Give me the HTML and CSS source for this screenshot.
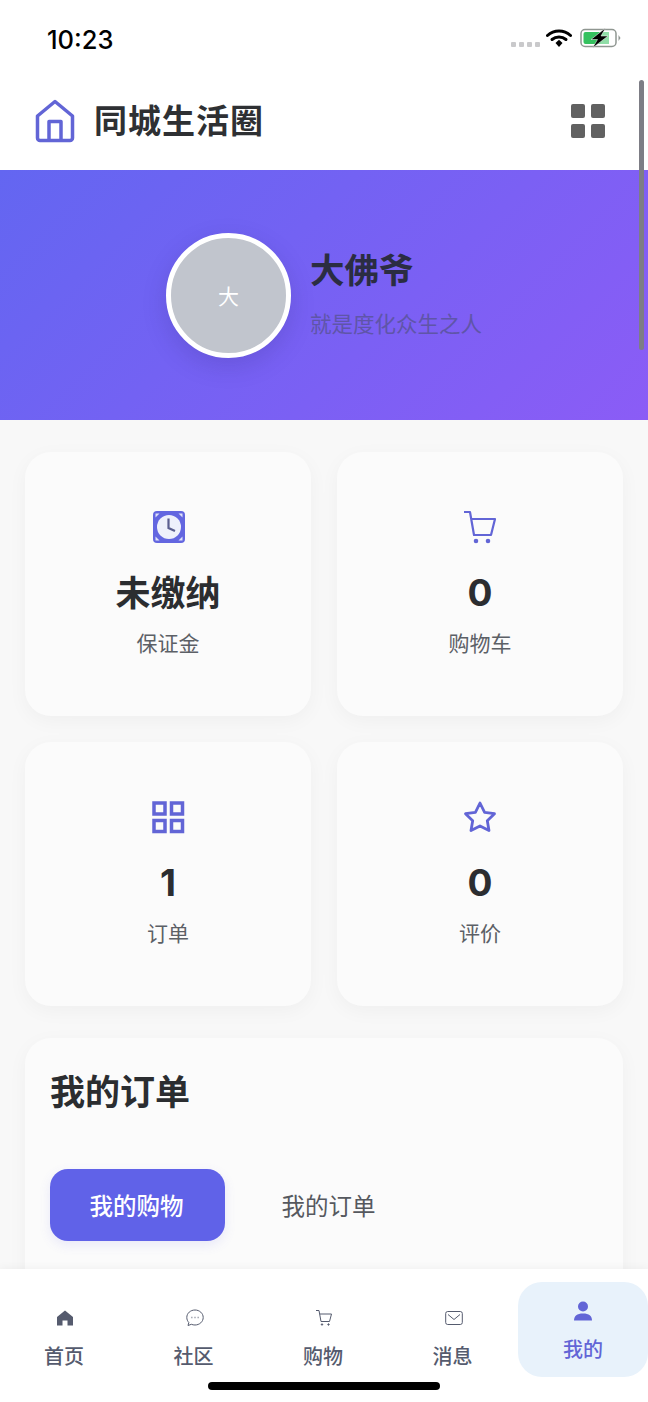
FILE: index.html
```html
<!DOCTYPE html>
<html lang="zh-CN">
<head>
  <meta charset="UTF-8" />
  <meta name="viewport" content="width=device-width, initial-scale=1.0" />
  <title>同城生活圈</title>
  <link rel="stylesheet" href="styles.css">
</head>
<body>
  <div class="app">
    <!-- status bar -->
    <div class="status-bar">
      <span class="time">10:23</span>
      <div class="status-icons">
        <div class="signal"><i></i><i></i><i></i><i></i></div>
        <svg class="wifi" width="26" height="20" viewBox="0 0 26 20">
          <path d="M1.500 7.500C8 1.500 18 1.500 24.500 7.500" fill="none" stroke="#000" stroke-width="3" stroke-linecap="round"/>
          <path d="M6 11.500C10 8 16 8 20 11.500" fill="none" stroke="#000" stroke-width="3" stroke-linecap="round"/>
          <path d="M9.500 15L13 11.800 16.500 15 13 19z" fill="#000"/>
        </svg>
        <svg class="battery" width="42" height="20" viewBox="0 0 42 20">
          <rect x="1" y="1.500" width="35" height="17" rx="4" fill="#fff" stroke="#8f9691" stroke-width="1.500"/>
          <rect x="3.500" y="4" width="17" height="12" rx="2" fill="#35c15f"/>
          <rect x="20" y="4" width="9" height="12" fill="#35c15f" opacity="0.55"/>
          <path d="M38.500 7l2 3-2 3z" fill="#8f9691"/>
          <path d="M25.500 0L11 11.500H17.500L12.500 20 28 8H21z" fill="#000" stroke="#fff" stroke-width="0.500"/>
        </svg>
      </div>
    </div>

    <header class="top-bar">
      <div class="brand">
        <svg width="42" height="44" viewBox="0 0 42 44" fill="none" stroke="#6265d6" stroke-width="3.500" stroke-linejoin="round">
          <path d="M21 2.500L38.500 17V39a2.500 2.500 0 0 1-2.500 2.500H6A2.500 2.500 0 0 1 3.500 39V17z"/>
          <path d="M15 41.500V22.500H27V41.500"/>
        </svg>
        <span class="brand-name">同城生活圈</span>
      </div>
      <div class="menu-grid"><i></i><i></i><i></i><i></i></div>
    </header>

    <main class="content">
      <section class="hero">
        <div class="avatar"><span>大</span></div>
        <div class="hero-text">
          <div class="hero-name">大佛爷</div>
          <div class="hero-bio">就是度化众生之人</div>
        </div>
      </section>

      <section class="stats">
        <div class="stat-card">
          <svg class="stat-icon icon-clock" width="34" height="34" viewBox="0 0 34 34">
            <rect x="1" y="1" width="32" height="32" rx="4" fill="#6366e0"/>
            <circle cx="17" cy="17" r="12" fill="#eef0fb"/>
            <path d="M3.500 3.500h4l-4 4zM30.500 3.500h-4l4 4zM3.500 30.500h4l-4-4zM30.500 30.500h-4l4-4z" fill="#dfe1f8"/>
            <path d="M16.500 8.500V18L23 21" fill="none" stroke="#5b5e8f" stroke-width="2.200"/>
          </svg>
          <div class="stat-value stat-text">未缴纳</div>
          <div class="stat-label">保证金</div>
        </div>
        <div class="stat-card">
          <svg class="stat-icon" width="36" height="34" viewBox="0 0 36 34" fill="none" stroke="#6265d6" stroke-width="2.200" stroke-linejoin="round">
            <path d="M2 2H8L12 25H29L33 9H9"/>
            <circle cx="14" cy="31" r="1.200" fill="#6265d6"/>
            <circle cx="26" cy="31" r="1.200" fill="#6265d6"/>
          </svg>
          <div class="stat-value">0</div>
          <div class="stat-label">购物车</div>
        </div>
        <div class="stat-card">
          <svg class="stat-icon" width="34" height="34" viewBox="0 0 34 34" fill="none" stroke="#6265d6" stroke-width="3.500">
            <rect x="3" y="3" width="11" height="11"/>
            <rect x="20.500" y="3" width="11" height="11"/>
            <rect x="3" y="20.500" width="11" height="11"/>
            <rect x="20.500" y="20.500" width="11" height="11"/>
          </svg>
          <div class="stat-value">1</div>
          <div class="stat-label">订单</div>
        </div>
        <div class="stat-card">
          <svg class="stat-icon" width="36" height="34" viewBox="0 0 36 34" fill="none" stroke="#6265d6" stroke-width="2.800" stroke-linejoin="round">
            <path d="M18 3L22.600 12.300 32.500 13.700 25.300 20.700 27 30.600 18 25.900 9 30.600 10.700 20.700 3.500 13.700 13.400 12.300z"/>
          </svg>
          <div class="stat-value">0</div>
          <div class="stat-label">评价</div>
        </div>
      </section>

      <section class="orders">
        <h2>我的订单</h2>
        <div class="tabs">
          <button class="tab active">我的购物</button>
          <button class="tab">我的订单</button>
        </div>
      </section>
    </main>

    <nav class="tabbar">
      <div class="nav-item">
        <svg width="18" height="18" viewBox="0 0 18 18"><path d="M9 1.500L17 8V16.500H11.500V11.500H6.500V16.500H1V8z" fill="#555b6e"/></svg>
        <span>首页</span>
      </div>
      <div class="nav-item">
        <svg width="18" height="18" viewBox="0 0 18 18" fill="none" stroke="#555b6e" stroke-width="1">
          <path d="M9 1C4.500 1 .8 4.200.8 8.500c0 2 .8 3.700 2 5l-.8 3 3.400-1.200c1.100.5 2.300.7 3.600.7 4.500 0 8.200-3.300 8.200-7.500S13.500 1 9 1z"/>
          <path d="M5.500 8.500h.8M8.600 8.500h.8M11.700 8.500h.8" stroke-width="1.300"/>
        </svg>
        <span>社区</span>
      </div>
      <div class="nav-item">
        <svg width="18" height="18" viewBox="0 0 18 18" fill="none" stroke="#555b6e" stroke-width="1">
          <path d="M1 1.500H4L6 12.500H14.500L16.500 5H4.800"/>
          <circle cx="7" cy="15.500" r=".7" fill="#555b6e"/>
          <circle cx="13.500" cy="15.500" r=".7" fill="#555b6e"/>
        </svg>
        <span>购物</span>
      </div>
      <div class="nav-item">
        <svg width="18" height="18" viewBox="0 0 18 18" fill="none" stroke="#555b6e" stroke-width="1">
          <rect x=".7" y="2.500" width="16.600" height="13" rx="2"/>
          <path d="M3 5.500L9 10.500 15 5.500"/>
        </svg>
        <span>消息</span>
      </div>
      <div class="nav-item current">
        <svg width="20" height="20" viewBox="0 0 20 20" fill="#6265d6">
          <circle cx="10" cy="5.500" r="5"/>
          <path d="M1 19.500c0-4.500 3-7 9-7s9 2.500 9 7z"/>
        </svg>
        <span>我的</span>
      </div>
    </nav>

    <div class="scroll-thumb"></div>
    <div class="home-bar"></div>
  </div>
</body>
</html>
```

FILE: styles.css
```css
* {
  box-sizing: border-box;
}

body {
  margin: 0;
  font-family: Inter, "Noto Sans CJK SC", sans-serif;
  color: #2b2d30;
  background: #f8f8f8;
}

.app {
  position: relative;
  width: 648px;
  height: 1402px;
  overflow: hidden;
  display: flex;
  flex-direction: column;
}

.status-bar {
  height: 72px;
  flex: none;
  background: #fff;
  display: flex;
  justify-content: space-between;
  align-items: flex-start;
  padding: 25px 26px 0 47px;
}

.time {
  font-size: 25.5px;
  line-height: 30px;
  font-weight: 500;
  color: #000;
}

.status-icons {
  display: flex;
  align-items: center;
  gap: 8px;
  margin-top: 3px;
}

.signal {
  display: flex;
  gap: 3px;
  margin-top: 13px;
  margin-right: -2px;
}

.signal i {
  width: 5px;
  height: 5px;
  border-radius: 1px;
  background: #c9c9cb;
}

.top-bar {
  height: 98px;
  flex: none;
  background: #fff;
  display: flex;
  justify-content: space-between;
  align-items: center;
  padding: 0 43px 0 34px;
}

.brand {
  display: flex;
  align-items: center;
  gap: 18px;
}

.brand-name {
  font-size: 33px;
  line-height: 44px;
  font-weight: 600;
  letter-spacing: 1px;
  color: #2e3033;
}

.menu-grid {
  display: grid;
  grid-template-columns: 14px 14px;
  gap: 6px;
}

.menu-grid i {
  height: 14px;
  border-radius: 2px;
  background: #616161;
}

.content {
  flex: 1;
  min-height: 0;
  overflow: hidden;
}

.hero {
  height: 250px;
  background: linear-gradient(135deg, #6366f1, #8b5cf6);
  display: flex;
  align-items: center;
  justify-content: center;
  gap: 19px;
}

.avatar {
  width: 125px;
  height: 125px;
  border-radius: 50%;
  background: #c1c5cd;
  border: 5px solid #fff;
  box-shadow: 0 8px 24px rgba(50, 40, 120, 0.2);
  display: flex;
  align-items: center;
  justify-content: center;
  color: #fff;
  font-size: 21px;
}

.hero-text {
  margin-top: -3px;
}

.hero-name {
  font-size: 34.5px;
  line-height: 44px;
  font-weight: 700;
  color: #2b2d42;
}

.hero-bio {
  margin-top: 16px;
  font-size: 21.5px;
  line-height: 30px;
  color: #5f55a8;
}

.stats {
  display: grid;
  grid-template-columns: 286px 286px;
  gap: 26px;
  padding: 32px 25px 0;
}

.stat-card {
  height: 264px;
  border-radius: 26px;
  background: #fbfbfb;
  box-shadow: 0 5px 20px rgba(0, 0, 0, 0.04);
  display: flex;
  flex-direction: column;
  align-items: center;
  padding-top: 58px;
}

.stat-icon {
  display: block;
}

.icon-clock {
  margin-left: 2px;
}

.stat-value {
  margin-top: 24px;
  height: 50px;
  font-size: 37px;
  line-height: 50px;
  font-weight: 700;
  color: #2b2d30;
}

.stat-text {
  font-size: 35px;
}

.stat-label {
  margin-top: 11px;
  font-size: 21px;
  line-height: 30px;
  color: #5c6066;
}

.orders {
  margin: 32px 25px 0;
  height: 300px;
  padding: 28px 25px;
  border-radius: 26px;
  background: #fbfbfb;
  box-shadow: 0 5px 20px rgba(0, 0, 0, 0.04);
}

.orders h2 {
  margin: 0;
  font-size: 35px;
  line-height: 52px;
  font-weight: 700;
  color: #2b2d30;
}

.tabs {
  margin-top: 51px;
  display: flex;
  align-items: center;
  gap: 17px;
}

.tab {
  width: 175px;
  height: 72px;
  padding: 0 2px 0 0;
  border: 0;
  border-radius: 18px;
  background: transparent;
  font-family: inherit;
  font-size: 23.5px;
  color: #55585e;
}

.tab.active {
  background: #6062e8;
  color: #fff;
  font-weight: 500;
  box-shadow: 0 4px 12px rgba(96, 98, 232, 0.12);
}

.tabbar {
  height: 133px;
  flex: none;
  background: #fff;
  box-shadow: 0 -2px 8px rgba(0, 0, 0, 0.04);
  position: relative;
  display: grid;
  grid-template-columns: 130px 129px 130px 129px 130px;
  align-items: start;
  z-index: 1;
}

.nav-item {
  display: flex;
  flex-direction: column;
  align-items: center;
  padding-top: 40px;
  font-size: 20px;
  font-weight: 500;
  color: #555b6e;
}

.nav-item span {
  margin: 15px 2px 0 0;
  line-height: 30px;
}

.nav-item.current {
  margin-top: 13px;
  height: 95px;
  border-radius: 24px;
  background: #e8f2fb;
  padding-top: 19px;
  color: #6265d6;
}

.nav-item.current span {
  margin: 14px 0 0;
}

/* overlays */
.scroll-thumb {
  position: absolute;
  top: 80px;
  left: 639px;
  width: 5px;
  height: 270px;
  border-radius: 3px;
  background: #7d7d85;
}

.home-bar {
  position: absolute;
  left: 208px;
  bottom: 12px;
  width: 232px;
  height: 8px;
  border-radius: 4px;
  background: #000;
  z-index: 2;
}
```
